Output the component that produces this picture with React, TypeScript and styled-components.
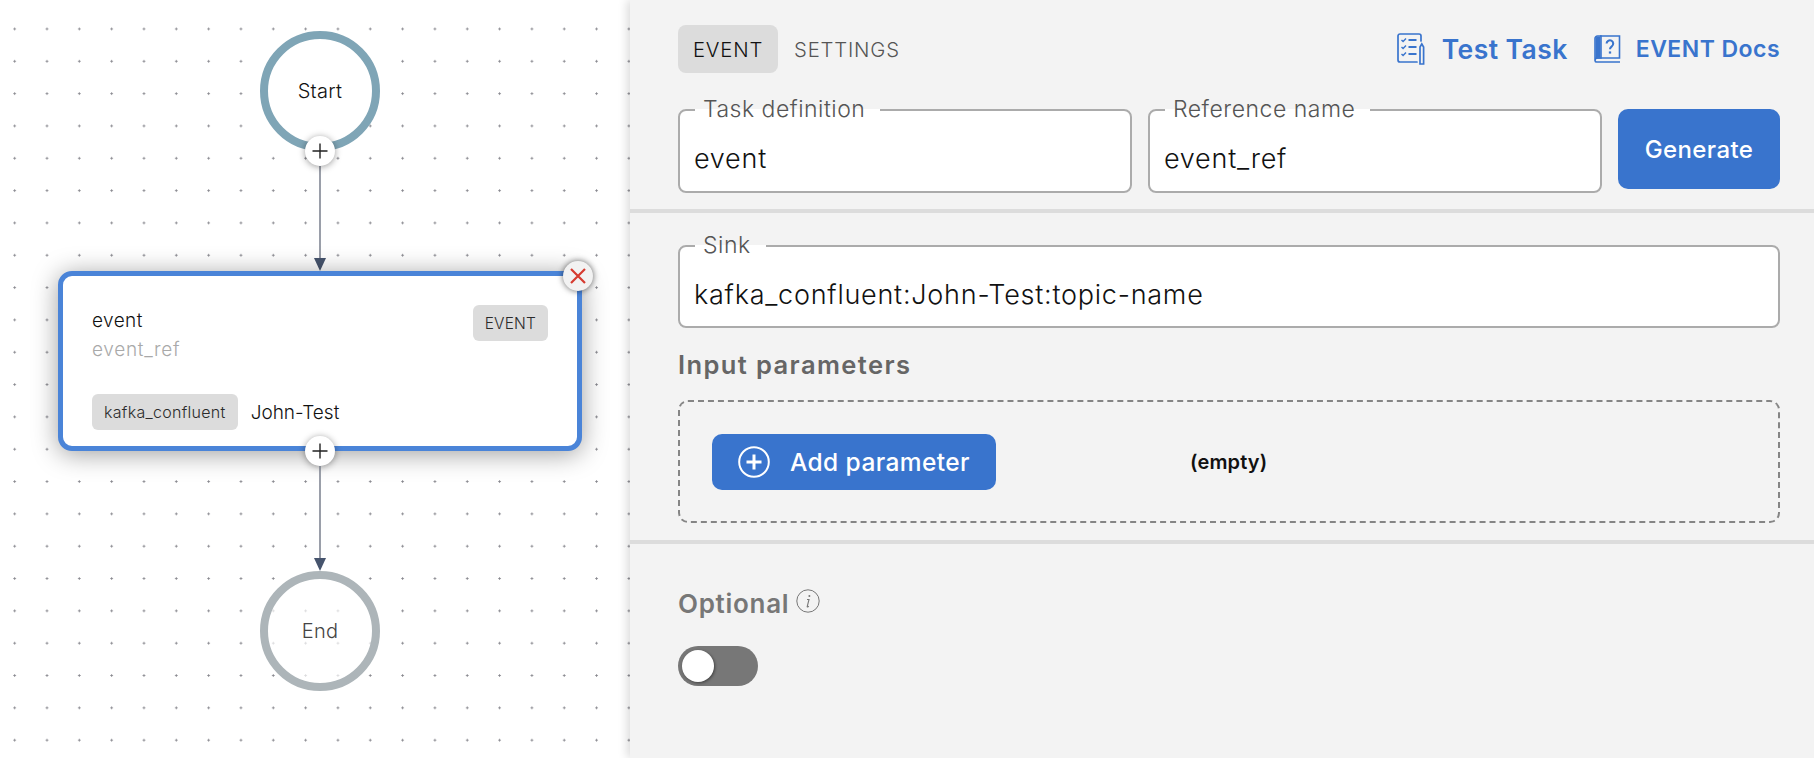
import React from "react";
import styled, { createGlobalStyle } from "styled-components";

const FONT = `"Inter", "Noto Sans", sans-serif`;
const BLUE = "#3974cd";

const GlobalStyle = createGlobalStyle`
  html, body {
    margin: 0;
    height: 100%;
    overflow: hidden;
    background: #f3f3f3;
    font-family: ${FONT};
  }
  * {
    box-sizing: border-box;
  }
`;

const Page = styled.div`
  display: grid;
  grid-template-columns: 630px 1fr;
  height: 758px;
`;

/* ---- diagram canvas ---- */

const Canvas = styled.div`
  position: relative;
  overflow: hidden;
  background-color: #fff;
  background-image: radial-gradient(circle, #85858c 0.9px, transparent 1.3px);
  background-size: 32.33px 32.33px;
  background-position: -1.5px 12.8px;
`;

const TerminalNode = styled.div<{ $top: number; $ring: string; $ink: string; $fill: string }>`
  position: absolute;
  left: 260px;
  top: ${(p) => p.$top}px;
  width: 120px;
  height: 120px;
  display: flex;
  align-items: center;
  justify-content: center;
  border: 8px solid ${(p) => p.$ring};
  border-radius: 50%;
  background: ${(p) => p.$fill};
  color: ${(p) => p.$ink};
  font-size: 20px;
  font-weight: 300;
  letter-spacing: 0.3px;
`;

const Edge = styled.svg<{ $top: number; $height: number }>`
  position: absolute;
  left: 312px;
  top: ${(p) => p.$top}px;
  width: 16px;
  height: ${(p) => p.$height}px;
`;

const TaskCard = styled.div`
  position: absolute;
  left: 58px;
  top: 271px;
  width: 524px;
  height: 180px;
  padding: 29px 29px 0 29px;
  background: #fff;
  border: 5px solid #4a84d8;
  border-radius: 14px;
  box-shadow: 0 3px 26px rgba(0, 0, 0, 0.38);
`;

const CardTop = styled.div`
  display: flex;
  justify-content: space-between;
  align-items: flex-start;
`;

const TaskName = styled.div`
  margin-top: 6px;
  font-size: 19px;
  line-height: 20px;
  font-weight: 300;
  color: #111;
  letter-spacing: 0.4px;
`;

const TaskRef = styled.div`
  margin-top: 9px;
  font-size: 19px;
  line-height: 20px;
  font-weight: 300;
  color: #a9a9a9;
  letter-spacing: 0.7px;
`;

const Chip = styled.span`
  display: inline-flex;
  align-items: center;
  justify-content: center;
  height: 36px;
  padding: 0 12px;
  background: #dcdcdc;
  border-radius: 6px;
  color: #2b2b2b;
  font-size: 15.5px;
  font-weight: 300;
  letter-spacing: 0.15px;
`;

const KafkaChip = styled(Chip)`
  font-size: 16px;
  letter-spacing: 0.3px;
`;

const CardBottom = styled.div`
  display: flex;
  align-items: center;
  gap: 13px;
  margin-top: 34px;
`;

const SinkName = styled.span`
  font-size: 19px;
  font-weight: 300;
  color: #111;
`;

const RoundButton = styled.button<{ $left: number; $top: number }>`
  position: absolute;
  left: ${(p) => p.$left}px;
  top: ${(p) => p.$top}px;
  width: 30px;
  height: 30px;
  padding: 0;
  display: flex;
  align-items: center;
  justify-content: center;
  border: 0;
  border-radius: 50%;
  background: #fff;
  box-shadow: 0 1px 7px rgba(0, 0, 0, 0.4);
`;

const CloseButton = styled(RoundButton)`
  background: #f2f2f2;
  box-shadow: 0 0 6px rgba(0, 0, 0, 0.6);
`;

/* ---- right side form ---- */

const Panel = styled.div`
  position: relative;
  background: #f3f3f3;
  box-shadow: -3px 0 9px rgba(0, 0, 0, 0.14);
`;

const Section = styled.div`
  padding: 0 34px 0 48px;
`;

const HeaderRow = styled.div`
  display: flex;
  align-items: center;
  justify-content: space-between;
  padding-top: 25px;
  height: 73px;
`;

const Tabs = styled.div`
  display: flex;
  gap: 16px;
`;

const Tab = styled.div<{ $active?: boolean }>`
  height: 48px;
  display: flex;
  align-items: center;
  padding: 0 ${(p) => (p.$active ? 15 : 0)}px;
  border-radius: 8px;
  background: ${(p) => (p.$active ? "#dcdcdc" : "transparent")};
  color: ${(p) => (p.$active ? "#111" : "#555")};
  font-size: 20.3px;
  font-weight: 300;
  letter-spacing: 0.8px;
`;

const HeaderLinks = styled.div`
  display: flex;
  align-items: center;
  gap: 26px;
`;

const DocLink = styled.a<{ $size: number; $gap: number }>`
  display: flex;
  align-items: center;
  gap: ${(p) => p.$gap}px;
  color: ${BLUE};
  font-size: ${(p) => p.$size}px;
  font-weight: 600;
  letter-spacing: 0.45px;
  white-space: nowrap;
`;

const FieldRow = styled.div`
  display: flex;
  align-items: flex-start;
  gap: 16px;
  margin-top: 23px;
`;

const Field = styled.fieldset`
  flex: 1;
  min-width: 0;
  height: 97px;
  margin: 0;
  padding: 0 14px;
  display: block;
  background: #fff;
  border: 2px solid #ababab;
  border-radius: 8px;
`;

const SinkField = styled(Field)`
  height: 96px;
`;

const FieldLabel = styled.legend`
  margin-left: 1px;
  padding: 0 15px 2px 8px;
  font-size: 23px;
  line-height: 26px;
  font-weight: 300;
  color: #555;
  letter-spacing: 0.5px;
`;

const FieldValue = styled.div`
  padding-top: 20px;
  font-size: 27px;
  line-height: 30px;
  font-weight: 300;
  color: #111;
  letter-spacing: 0.75px;
`;

const PrimaryButton = styled.button`
  display: flex;
  align-items: center;
  justify-content: center;
  border: 0;
  background: ${BLUE};
  color: #fff;
  font-family: ${FONT};
  font-weight: 500;
`;

const GenerateButton = styled(PrimaryButton)`
  flex: 0 0 162px;
  height: 80px;
  margin-top: 13px;
  border-radius: 10px;
  font-size: 24px;
  letter-spacing: 0.4px;
`;

const Divider = styled.div<{ $top: number }>`
  height: 4px;
  margin-top: ${(p) => p.$top}px;
  background: #dcdcdc;
`;

const SinkRow = styled.div`
  margin-top: 19px;
`;

const SectionLabel = styled.div`
  margin-top: 22px;
  font-size: 25.5px;
  line-height: 30px;
  font-weight: 600;
  color: #666;
  letter-spacing: 1.4px;
`;

const DashedBox = styled.div`
  display: flex;
  align-items: center;
  height: 123px;
  margin-top: 20px;
  padding-left: 32px;
  border: 2px dashed #858585;
  border-radius: 10px;
`;

const AddButton = styled(PrimaryButton)`
  flex: 0 0 284px;
  height: 56px;
  gap: 20px;
  justify-content: flex-start;
  padding-left: 26px;
  border-radius: 10px;
  font-size: 24.5px;
  letter-spacing: 0.4px;
`;

const EmptyNote = styled.span`
  margin-left: 194px;
  font-size: 20px;
  font-weight: 600;
  color: #111;
  letter-spacing: 0.15px;
`;

const OptionalRow = styled.div`
  display: flex;
  align-items: center;
  gap: 7px;
  margin-top: 44px;
  height: 30px;
  color: #777;
  font-size: 26px;
  font-weight: 600;
  letter-spacing: 0.7px;

  svg {
    margin-bottom: 4px;
  }
`;

const Toggle = styled.div`
  display: flex;
  align-items: center;
  width: 80px;
  height: 40px;
  margin-top: 28px;
  padding-left: 4px;
  background: #777;
  border-radius: 20px;
`;

const ToggleKnob = styled.div`
  width: 32px;
  height: 32px;
  border-radius: 50%;
  background: #fff;
  box-shadow: 1px 1px 3px rgba(0, 0, 0, 0.45);
`;

const PlusIcon = () => (
  <svg width="20" height="20" viewBox="0 0 20 20" fill="none" stroke="#222" strokeWidth="1.4">
    <path d="M10 2.5v15M2.5 10h15" />
  </svg>
);

const CrossIcon = () => (
  <svg width="20" height="20" viewBox="0 0 20 20" fill="none" stroke="#d63b30" strokeWidth="2.2">
    <path d="M3 3l14 14M17 3L3 17" />
  </svg>
);

const EdgeLine = ({ top, height }: { top: number; height: number }) => (
  <Edge $top={top} $height={height} viewBox={`0 0 16 ${height}`}>
    <path d={`M8 0V${height - 10}`} stroke="#6f7685" strokeWidth="1.4" fill="none" />
    <path d={`M2 ${height - 13}H14L8 ${height}Z`} fill="#46546d" />
  </Edge>
);

const TestTaskIcon = () => (
  <svg width="28" height="32" viewBox="0 0 28 32" fill="none" stroke={BLUE} strokeWidth="1.7">
    <path d="M24 8V3a2 2 0 0 0-2-2H3a2 2 0 0 0-2 2v24a2 2 0 0 0 2 2h17" strokeLinecap="round" />
    <path d="M4.5 7l1.6 1.6L9 5.6M4.5 14l1.6 1.6L9 12.6M4.5 21l1.6 1.6L9 19.6" strokeWidth="1.4" />
    <path d="M11.5 7h8M11.5 14h8M11.5 21h8" strokeWidth="2" />
    <path d="M23 31h3.6V14l-1.8-3-1.8 3Z" />
  </svg>
);

const DocsIcon = () => (
  <svg width="27" height="28" viewBox="0 0 27 28" fill="none" stroke={BLUE} strokeWidth="1.6">
    <path d="M6 1h19.5v22H3" />
    <path d="M1 25V3.5A2.5 2.5 0 0 1 3.5 1H7v22H3.5A2.5 2.5 0 0 0 1 25.5 1.8 1.8 0 0 0 3 27h23" />
    <path d="M1.5 3.5A2.5 2.5 0 0 1 4 1.5H6.5V22.5H4L1.5 24Z" fill={BLUE} stroke="none" />
    <path d="M12.6 8.6a3.3 3.3 0 1 1 5.2 2.7c-1.3.9-1.8 1.5-1.8 3" strokeWidth="2.1" />
    <path d="M16 16.4v2.2" strokeWidth="2.3" />
  </svg>
);

const AddCircleIcon = () => (
  <svg width="32" height="32" viewBox="0 0 32 32" fill="none" stroke="#fff">
    <circle cx="16" cy="16" r="14.8" strokeWidth="2" />
    <path d="M16 8.5v15M8.5 16h15" strokeWidth="3" />
  </svg>
);

const InfoIcon = () => (
  <svg width="24" height="24" viewBox="0 0 24 24" fill="none">
    <circle cx="12" cy="12" r="11.2" stroke="#777" strokeWidth="1" />
    <path d="M11 10.5h2l-1.8 7c-.1.6.6.6 1.6-.4" stroke="#777" strokeWidth="1.1" />
    <circle cx="13.4" cy="7" r="1" fill="#777" />
  </svg>
);

const App: React.FC = () => {
  return (
    <>
      <GlobalStyle />
      <Page>
        <Canvas>
          <TerminalNode $top={31} $ring="#7fa5b6" $ink="#111" $fill="#fff">Start</TerminalNode>
          <EdgeLine top={166} height={105} />
          <RoundButton $left={305} $top={136}><PlusIcon /></RoundButton>
          <TaskCard>
            <CardTop>
              <div>
                <TaskName>event</TaskName>
                <TaskRef>event_ref</TaskRef>
              </div>
              <Chip>EVENT</Chip>
            </CardTop>
            <CardBottom>
              <KafkaChip>kafka_confluent</KafkaChip>
              <SinkName>John-Test</SinkName>
            </CardBottom>
          </TaskCard>
          <CloseButton $left={563} $top={261}><CrossIcon /></CloseButton>
          <RoundButton $left={305} $top={436}><PlusIcon /></RoundButton>
          <EdgeLine top={466} height={105} />
          <TerminalNode $top={571} $ring="#adb5b9" $ink="#444" $fill="rgba(255, 255, 255, 0.7)">End</TerminalNode>
        </Canvas>
        <Panel>
          <Section>
            <HeaderRow>
              <Tabs>
                <Tab $active>EVENT</Tab>
                <Tab>SETTINGS</Tab>
              </Tabs>
              <HeaderLinks>
                <DocLink $size={26.5} $gap={17}><TestTaskIcon />Test Task</DocLink>
                <DocLink $size={23} $gap={15}><DocsIcon />EVENT Docs</DocLink>
              </HeaderLinks>
            </HeaderRow>
            <FieldRow>
              <Field>
                <FieldLabel>Task definition</FieldLabel>
                <FieldValue>event</FieldValue>
              </Field>
              <Field>
                <FieldLabel>Reference name</FieldLabel>
                <FieldValue>event_ref</FieldValue>
              </Field>
              <GenerateButton>Generate</GenerateButton>
            </FieldRow>
          </Section>
          <Divider $top={16} />
          <Section>
            <SinkRow>
              <SinkField>
                <FieldLabel>Sink</FieldLabel>
                <FieldValue>kafka_confluent:John-Test:topic-name</FieldValue>
              </SinkField>
            </SinkRow>
            <SectionLabel>Input parameters</SectionLabel>
            <DashedBox>
              <AddButton><AddCircleIcon />Add parameter</AddButton>
              <EmptyNote>(empty)</EmptyNote>
            </DashedBox>
          </Section>
          <Divider $top={17} />
          <Section>
            <OptionalRow>Optional<InfoIcon /></OptionalRow>
            <Toggle><ToggleKnob /></Toggle>
          </Section>
        </Panel>
      </Page>
    </>
  );
};

export default App;
